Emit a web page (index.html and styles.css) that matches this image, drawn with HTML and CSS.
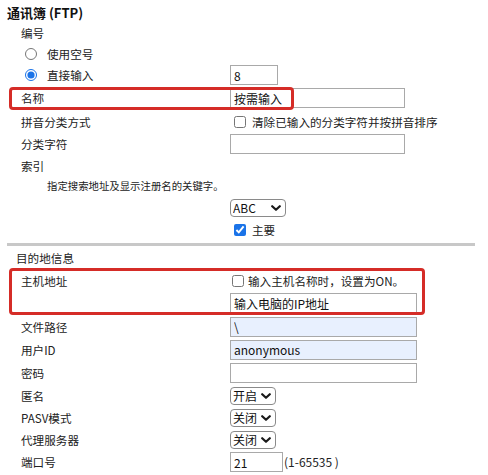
FILE: index.html
```html
<!DOCTYPE html>
<html lang="zh-CN">
<head>
<meta charset="utf-8">
<title>通讯簿 (FTP)</title>
<link rel="stylesheet" href="styles.css">
</head>
<body>
<div class="page">
  <div class="title">通讯簿 (FTP)</div>

  <div class="row h21"><span class="label">编号</span></div>
  <div class="row h21"><label class="radio"><input type="radio" name="num">使用空号</label></div>
  <div class="row h22"><label class="radio"><input type="radio" name="num" checked>直接输入</label><div class="value"><input class="text w48" value="8"></div></div>

  <div class="row h24 mark mark-name"><span class="label">名称</span><div class="value"><input class="text w175" value="按需输入"></div></div>

  <div class="row h23"><span class="label">拼音分类方式</span><label class="value check"><input type="checkbox">清除已输入的分类字符并按拼音排序</label></div>
  <div class="row h22"><span class="label">分类字符</span><div class="value"><input class="text w175" value=""></div></div>
  <div class="row h21"><span class="label">索引</span></div>
  <div class="row h20"><span class="desc">指定搜索地址及显示注册名的关键字。</span></div>
  <div class="row h23"><span></span><div class="value"><span class="select w56"><select><option>ABC</option></select><svg class="chev" viewBox="0 0 10 6"><path d="M1.2 1.2L5 4.8L8.8 1.2"/></svg></span></div></div>
  <div class="row h21"><span></span><label class="value check"><input type="checkbox" checked>主要</label></div>

  <div class="sep"></div>

  <div class="row h20"><span class="section">目的地信息</span></div>

  <div class="mark mark-host">
    <div class="row h22"><span class="label">主机地址</span><label class="value check check-tight"><input type="checkbox">输入主机名称时，设置为ON。</label></div>
    <div class="row h22"><span></span><div class="value"><input class="text w187" value="输入电脑的IP地址"></div></div>
  </div>

  <div class="row h23"><span class="label">文件路径</span><div class="value"><input class="text w187 fill" value="\"></div></div>
  <div class="row h23"><span class="label">用户ID</span><div class="value"><input class="text w187 fill" value="anonymous"></div></div>
  <div class="row h23"><span class="label">密码</span><div class="value"><input class="text w187" type="password" value=""></div></div>
  <div class="row h23"><span class="label">匿名</span><div class="value"><span class="select w46"><select><option>开启</option></select><svg class="chev" viewBox="0 0 10 6"><path d="M1.2 1.2L5 4.8L8.8 1.2"/></svg></span></div></div>
  <div class="row h22"><span class="label">PASV模式</span><div class="value"><span class="select w46"><select><option>关闭</option></select><svg class="chev" viewBox="0 0 10 6"><path d="M1.2 1.2L5 4.8L8.8 1.2"/></svg></span></div></div>
  <div class="row h22"><span class="label">代理服务器</span><div class="value"><span class="select w46"><select><option>关闭</option></select><svg class="chev" viewBox="0 0 10 6"><path d="M1.2 1.2L5 4.8L8.8 1.2"/></svg></span></div></div>
  <div class="row h22"><span class="label">端口号</span><div class="value"><input class="text w53" value="21"><span class="range">(1-65535 )</span></div></div>
</div>
</body>
</html>
```

FILE: styles.css
```css
html, body {
  margin: 0;
  padding: 0;
  background: #fff;
}

body {
  font-family: "Noto Sans CJK SC", "Noto Sans", sans-serif;
  font-size: 11.6px;
  color: #222;
}

.page {
  padding: 3px 0 0 7px;
  width: 468px;
}

.title {
  height: 19px;
  line-height: 19px;
  font-size: 13px;
  font-weight: bold;
  color: #111;
}

.row {
  display: grid;
  grid-template-columns: 223px auto;
  align-items: center;
  line-height: 16px;
}

.h20 { height: 20px; }
.h21 { height: 21px; }
.h22 { height: 22px; }
.h23 { height: 23px; }
.h24 { height: 24px; }

.label {
  padding-left: 14px;
}

.section {
  padding-left: 9px;
  grid-column: 1 / 3;
}

.desc {
  grid-column: 1 / 3;
  padding-left: 40px;
  font-size: 10.4px;
}

.radio {
  display: flex;
  align-items: center;
  padding-left: 18px;
}

.radio input {
  width: 12px;
  height: 12px;
  margin: 0 10px 0 0;
  accent-color: #1a73e8;
}

.value {
  display: flex;
  align-items: center;
}

.check input {
  width: 12px;
  height: 12px;
  margin: 0 6px 0 4px;
  accent-color: #1a73e8;
}

.check-tight input {
  margin: 0 4px 0 2px;
}

.text {
  box-sizing: border-box;
  height: 20px;
  margin: 0;
  padding: 0 3px;
  border: 1px solid #a9a9a9;
  border-radius: 0;
  background: #fff;
  font-family: "Noto Sans CJK SC", "Noto Sans", sans-serif;
  font-size: 12px;
  color: #111;
  outline: none;
}

.fill {
  background: #e8f0fe;
}

.w48 { width: 48px; }
.w53 { width: 53px; }
.w175 { width: 175px; }
.w187 { width: 187px; }

.select {
  position: relative;
  display: inline-block;
  height: 18px;
}

.select select {
  -webkit-appearance: none;
  appearance: none;
  box-sizing: border-box;
  width: 100%;
  height: 18px;
  margin: 0;
  padding: 0 12px 0 2px;
  border: 1px solid #8a8a8a;
  border-radius: 4px;
  background: #fff;
  font-family: "Noto Sans CJK SC", "Noto Sans", sans-serif;
  font-size: 12px;
  line-height: 16px;
  color: #111;
  outline: none;
}

.chev {
  position: absolute;
  right: 5px;
  top: 6px;
  width: 10px;
  height: 6px;
  pointer-events: none;
}

.chev path {
  fill: none;
  stroke: #1a1a1a;
  stroke-width: 2.2;
  stroke-linecap: round;
  stroke-linejoin: round;
}

.w56 { width: 56px; }
.w46 { width: 46px; }

.range {
  margin-left: 1px;
  font-size: 12px;
}

.sep {
  height: 3px;
  width: 468px;
  margin: 3px 0 2px;
  background: #c8c8c8;
}

.mark {
  position: relative;
}

.mark::after {
  content: "";
  position: absolute;
  box-sizing: border-box;
  border: 3px solid #d52c27;
  border-radius: 4px;
  pointer-events: none;
}

.mark-name::after {
  left: 2px;
  top: 1px;
  width: 285px;
  height: 23px;
}

.mark-host {
  padding: 2px 0 1px;
}

.mark-host::after {
  left: 2px;
  top: 0;
  width: 416px;
  height: 47px;
}
```
